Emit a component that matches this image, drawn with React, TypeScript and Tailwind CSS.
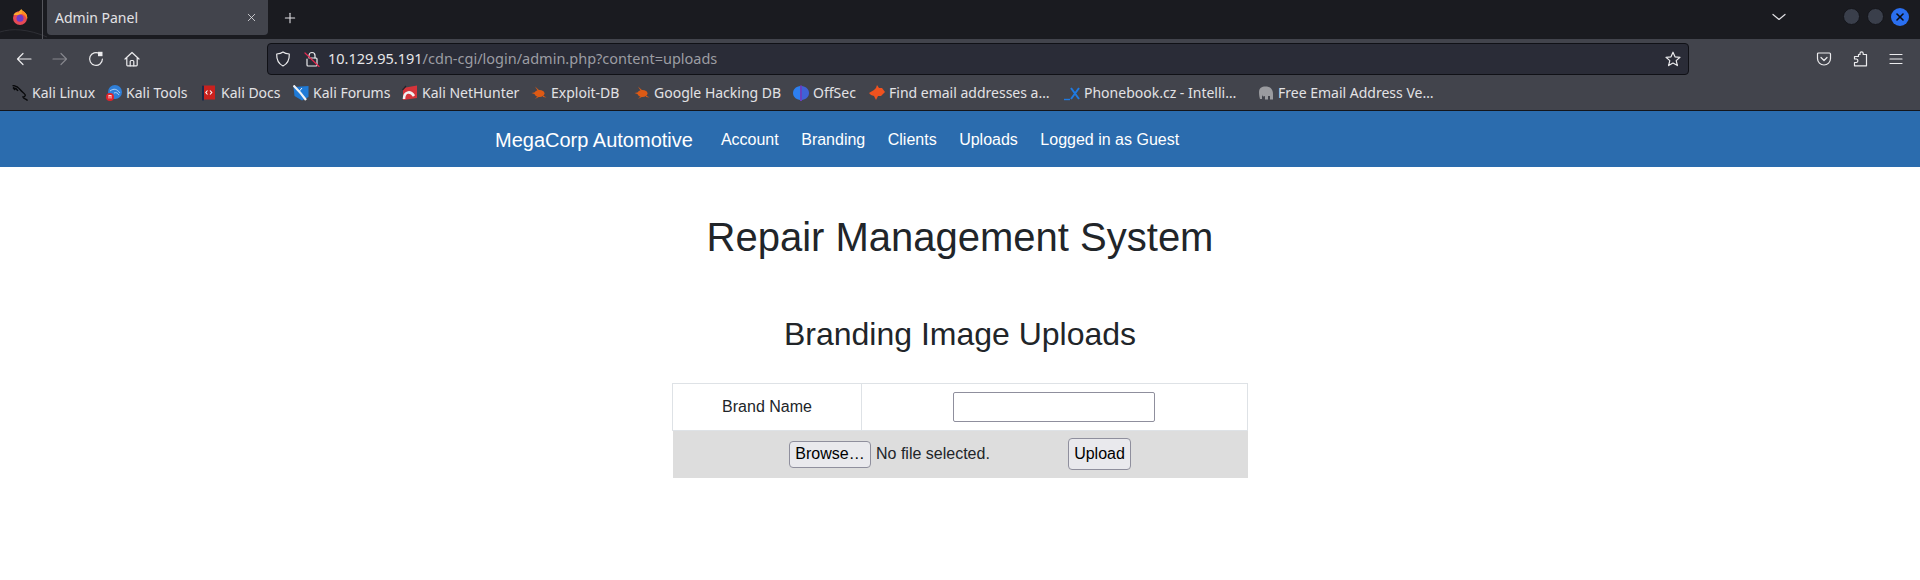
import { Plus, X } from 'lucide-react';
import type { ReactNode } from 'react';

function Glyph({ children, className }: { children: ReactNode; className?: string }) {
  return (
    <svg
      width="16"
      height="16"
      viewBox="0 0 16 16"
      fill="none"
      stroke="currentColor"
      strokeWidth="1.2"
      strokeLinecap="round"
      strokeLinejoin="round"
      className={`shrink-0 ${className ?? ''}`}
    >
      {children}
    </svg>
  );
}

function FirefoxLogo() {
  return (
    <svg width="16" height="16" viewBox="0 0 16 16">
      <circle cx="8" cy="9" r="7" fill="#e64a55" />
      <path d="M1.5 6 C3 3 5 3 6.5 3.5 C7 2 8.5 1 9.5 0 C9.5 2 15.5 3 15.3 9.5 C14 5.5 10 3.8 6 6 Z" fill="#fba92e" />
      <path d="M10 1.5 C14 3.5 16 6.5 15 11 C14.5 7.5 12 5.5 9.5 4.5 Z" fill="#ff8a1f" />
      <circle cx="8" cy="9.3" r="3.5" fill="#6d3bc7" />
    </svg>
  );
}

function KaliIcon() {
  return (
    <svg width="16" height="16" viewBox="0 0 16 16" fill="none" stroke="#08090b" strokeWidth="1.3">
      <path d="M0.5 0.5 C4 0.5 6 2 8 4.5 C10 7 12 8 13 9.5 C14 11 12 12 11 12 C11.5 14 14 13.5 15.5 15.5" />
      <path d="M1 3 C3 3 5 4 6 6 M1 2.5 L3 5" />
    </svg>
  );
}

function KaliToolsIcon() {
  return (
    <svg width="16" height="16" viewBox="0 0 16 16">
      <circle cx="9" cy="7" r="7" fill="#2f7fd8" />
      <path d="M4 6 C8 3 11 4 14 8 M8 8 C10 7 12 8 13 10" stroke="#cfe3f7" strokeWidth="0.8" fill="none" />
      <circle cx="4" cy="12" r="4" fill="#e0242b" />
      <path d="M2.5 10.5 H5.5 M3 10.5 V13.5 M5 10.5 V13.5" stroke="#fff" strokeWidth="0.8" />
    </svg>
  );
}

function KaliDocsIcon() {
  return (
    <svg width="16" height="16" viewBox="0 0 16 16">
      <rect x="1" y="0.5" width="13" height="14" fill="#c9211e" />
      <rect x="1" y="0.5" width="2" height="15" fill="#1c2a4a" />
      <path d="M6.5 5.5 L4.8 7.5 L6.5 9.5 M9 5.5 L10.8 7.5 L9 9.5" stroke="#fff" strokeWidth="1.1" fill="none" />
    </svg>
  );
}

function KaliForumsIcon() {
  return (
    <svg width="16" height="16" viewBox="0 0 16 16">
      <path d="M0.5 2 L15.5 1 V12 L9 15.5 L1.5 11 Z" fill="#1f7ad6" />
      <path d="M0.5 0.5 C4 4 8 8 13 15" stroke="#f0f3f6" strokeWidth="2.2" fill="none" />
      <path d="M9 3 L6 6.5" stroke="#f0f3f6" strokeWidth="1" />
    </svg>
  );
}

function NetHunterIcon() {
  return (
    <svg width="16" height="16" viewBox="0 0 16 16">
      <path d="M1 3 L15 0.5 V13 L1 15 Z" fill="#d5343a" />
      <path d="M2 14 C2 7 8 5 12 11" stroke="#f2f2f2" strokeWidth="2.6" fill="none" />
      <path d="M0.5 5 L4 1" stroke="#20242c" strokeWidth="1.2" />
    </svg>
  );
}

function ExploitIcon() {
  return (
    <svg width="16" height="16" viewBox="0 0 16 16" fill="#dd5a14">
      <ellipse cx="8.5" cy="8.5" rx="5" ry="3.4" />
      <path d="M0.5 8 L6 7 V10 Z M4 1.5 L9 6 L7.5 7 Z M4 14 L8 10 L9.5 11 Z M12 12 L15.5 12.5 L12 10.5 Z" />
    </svg>
  );
}

function OffSecIcon() {
  return (
    <svg width="16" height="16" viewBox="0 0 16 16">
      <path d="M7 1 C2 2 0 5 0 8 C0 11 2 14 7 15 Z" fill="#2d7ff0" />
      <path d="M9 1 C14 2 16 5 16 8 C16 11 14 14 9 15 Z" fill="#3f62d6" />
      <rect x="7.3" y="0.5" width="1.4" height="15.5" fill="#7a3ff0" />
    </svg>
  );
}

function FoxIcon() {
  return (
    <svg width="16" height="16" viewBox="0 0 16 16">
      <path d="M0 8 L5 5 L7 3 L8 0 L10 3 L13 3 L16 7 L12 11 L9 11 L7 15 L5 11 L2 10 Z" fill="#f0521f" />
    </svg>
  );
}

function PhonebookIcon() {
  return (
    <svg width="16" height="16" viewBox="0 0 16 16">
      <path d="M0 14.5 H6" stroke="#1f7ae0" strokeWidth="1.4" />
      <path d="M7 3 L15 14 M15 3 L7 14" stroke="#1f7ae0" strokeWidth="2" />
    </svg>
  );
}

function ElephantIcon() {
  return (
    <svg width="16" height="16" viewBox="0 0 16 16" fill="#9a9b9f">
      <path d="M1 7 C1 2 5 1 9 1.5 C13 2 15 5 15 9 V14.5 H12 V11 H10 V14.5 H7 V11 C5 12 4 11 4 9 V14 H2 C1.5 12 1 10 1 7 Z" />
    </svg>
  );
}

function Bookmark({ icon, label, className }: { icon: ReactNode; label: string; className: string }) {
  return (
    <div className="flex shrink-0 items-center gap-[4px]">
      <span className="flex h-4 w-4 shrink-0 items-center justify-center">{icon}</span>
      <span className={`whitespace-nowrap text-[14px] leading-[20px] text-[#e2e2e5] ${className}`}>{label}</span>
    </div>
  );
}

function BrowserChrome() {
  return (
    <div className="font-['Noto_Sans',sans-serif]">
      {/* Tab strip */}
      <div className="relative flex h-[39px] items-start overflow-hidden bg-[#1a1b20] text-[#e2e2e5]">
        <svg className="absolute bottom-0 left-0" width="47" height="20" viewBox="0 0 47 20" fill="none" stroke="#2e2f35" strokeWidth="1">
          <path d="M0 13 C12 9 28 10 47 18" />
        </svg>
        <div className="relative flex h-[34px] w-[42px] shrink-0 items-center justify-center pr-[2px]">
          <FirefoxLogo />
        </div>
        <div className="relative h-[39px] w-px shrink-0 bg-[#55565c]" />
        <div className="relative ml-[4px] flex h-[35px] w-[221px] shrink-0 items-center justify-between rounded-b-[4px] bg-[#42444c] pl-[8px] pr-[10px]">
          <span className="text-[14px]">Admin Panel</span>
          <X size={13} strokeWidth={1.5} />
        </div>
        <div className="relative ml-[14px] flex h-[36px] w-4 items-center justify-center">
          <Plus size={16} strokeWidth={1.6} />
        </div>
        <div className="relative ml-auto flex h-[33px] items-center pr-[11px]">
          <Glyph className="mr-[56px]">
            <path d="M2 5.5 L8 10.5 L14 5.5" />
          </Glyph>
          <div className="flex items-center gap-[7px]">
            <span className="h-[17px] w-[17px] rounded-full border border-[#14151a] bg-[#3a3f4b]" />
            <span className="h-[17px] w-[17px] rounded-full border border-[#14151a] bg-[#3a3f4b]" />
            <span className="flex h-[18px] w-[18px] items-center justify-center rounded-full bg-[#2a6ff0]">
              <X size={12} strokeWidth={3.2} className="text-[#0b0c10]" />
            </span>
          </div>
        </div>
      </div>
      {/* Toolbar */}
      <div className="flex h-[36px] items-center bg-[#42444c] pt-[4px] text-[#ebebed]">
        <div className="flex w-[267px] shrink-0 items-center gap-[20px] pl-[16px]">
          <Glyph>
            <path d="M1.5 8 H15 M7 2.5 L1.5 8 L7 13.5" />
          </Glyph>
          <Glyph className="text-[#85868c]">
            <path d="M14.5 8 H1 M9 2.5 L14.5 8 L9 13.5" />
          </Glyph>
          <Glyph>
            <path d="M11.5 2.6 A6.4 6.4 0 1 0 14.4 8" />
            <path d="M10 0.8 L14.5 0.8 L14.5 5.2 L10 5.2 Z" fill="currentColor" stroke="none" />
          </Glyph>
          <Glyph>
            <path d="M1 8 L8 1.5 L15 8 M2.8 6.5 V14 A0.8 0.8 0 0 0 3.6 14.8 H12.4 A0.8 0.8 0 0 0 13.2 14 V6.5" />
            <path d="M6.2 14.8 V10.5 A1 1 0 0 1 7.2 9.5 H8.8 A1 1 0 0 1 9.8 10.5 V14.8" />
          </Glyph>
        </div>
        <div className="flex h-[32px] w-[1422px] shrink-0 items-center rounded-[4px] border border-[#101116] bg-[#2a2c37] pl-[7px] pr-[7px] text-[14.5px]">
          <Glyph>
            <path d="M8 1 C10 2.5 12 2.8 14.3 3 C14.5 8.5 12.5 12.8 8 15 C3.5 12.8 1.5 8.5 1.7 3 C4 2.8 6 2.5 8 1 Z" />
          </Glyph>
          <Glyph className="ml-[13px]">
            <path d="M5 7 V4.5 A3 3 0 0 1 11 4.5 V7" />
            <path d="M3 8 V14 A1 1 0 0 0 4 15 H12 A1 1 0 0 0 13 14 V8 A1 1 0 0 0 12 7 H6" />
            <path d="M1 2 L15 15.5" stroke="#e3294f" />
          </Glyph>
          <span className="ml-[8px] text-[#e6e6e8]">10.129.95.191</span>
          <span className="text-[#9c9da3]">/cdn-cgi/login/admin.php?content=uploads</span>
          <Glyph className="ml-auto">
            <path d="M8 1.2 L10 5.8 L15 6.3 L11.2 9.6 L12.4 14.6 L8 12 L3.6 14.6 L4.8 9.6 L1 6.3 L6 5.8 Z" />
          </Glyph>
        </div>
        <div className="flex flex-1 items-center justify-end gap-[20px] pr-[16px]">
          <Glyph>
            <path d="M2.5 2 H13.5 A1 1 0 0 1 14.5 3 V7.5 A6.5 6.5 0 0 1 1.5 7.5 V3 A1 1 0 0 1 2.5 2 Z" />
            <path d="M5 6.5 L8 9.5 L11 6.5" />
          </Glyph>
          <Glyph>
            <path d="M6.5 3.5 H8 V2.5 A1.6 1.6 0 0 1 11.2 2.5 V3.5 H14.5 V14.8 H2.5 V11.5 H4.5 A1.8 1.8 0 0 0 4.5 8 H2.5 V5.5 H6.5 Z" />
          </Glyph>
          <Glyph>
            <path d="M2 3.5 H14 M2 8 H14 M2 12.5 H14" />
          </Glyph>
        </div>
      </div>
      {/* Bookmarks */}
      <div className="flex h-[36px] items-center gap-[13px] border-b border-[#14151a] bg-[#42444c] pt-[1px] pl-[12px]">
        <Bookmark icon={<KaliIcon />} label="Kali Linux" className="w-[61px]" />
        <Bookmark icon={<KaliToolsIcon />} label="Kali Tools" className="w-[62px]" />
        <Bookmark icon={<KaliDocsIcon />} label="Kali Docs" className="w-[59px]" />
        <Bookmark icon={<KaliForumsIcon />} label="Kali Forums" className="w-[76px]" />
        <Bookmark icon={<NetHunterIcon />} label="Kali NetHunter" className="w-[96px]" />
        <Bookmark icon={<ExploitIcon />} label="Exploit-DB" className="w-[70px]" />
        <Bookmark icon={<ExploitIcon />} label="Google Hacking DB" className="w-[126px]" />
        <Bookmark icon={<OffSecIcon />} label="OffSec" className="w-[43px]" />
        <Bookmark icon={<FoxIcon />} label="Find email addresses a…" className="w-[162px]" />
        <Bookmark icon={<PhonebookIcon />} label="Phonebook.cz - Intelli…" className="w-[161px]" />
        <Bookmark icon={<ElephantIcon />} label="Free Email Address Ve…" className="w-[160px]" />
      </div>
    </div>
  );
}

export default function App() {
  return (
    <div className="h-[580px] overflow-hidden bg-white font-['Liberation_Sans',Arial,sans-serif] text-[#212529]">
      <BrowserChrome />
      {/* Site nav */}
      <nav className="flex h-[56px] items-center bg-[#2b6cae] pl-[495px] pt-[1px] text-white">
        <a className="mr-[28px] text-[20px]">MegaCorp Automotive</a>
        <div className="flex items-center gap-[22.5px] text-[16px]">
          <a>Account</a>
          <a>Branding</a>
          <a>Clients</a>
          <a>Uploads</a>
          <a>Logged in as Guest</a>
        </div>
      </nav>
      <main className="flex flex-col items-center">
        <h1 className="mt-[46px] text-[40px] leading-[48px]">Repair Management System</h1>
        <h2 className="mt-[54px] text-[32px] leading-[38px]">Branding Image Uploads</h2>
        <table className="mt-[30px] w-[576px] border-collapse text-[16px]">
          <tbody>
            <tr className="h-[47px]">
              <td className="w-[189px] border border-[#dee2e6] text-center">Brand Name</td>
              <td className="border border-[#dee2e6] text-center">
                <div className="mr-[2px] flex justify-center">
                  <input className="h-[30px] w-[202px] rounded-[2px] border border-[#8f8f9d] bg-white" />
                </div>
              </td>
            </tr>
            <tr className="h-[47px] bg-[#dddddd]">
              <td colSpan={2}>
                <div className="flex items-center justify-center">
                  <div className="flex w-[279px] items-center">
                    <button className="h-[27px] w-[82px] rounded-[4px] border border-[#8f8f9d] bg-[#e9e9ed] text-[16px] text-black">Browse…</button>
                    <span className="ml-[5px]">No file selected.</span>
                  </div>
                  <button className="h-[32px] w-[63px] rounded-[4px] border border-[#8f8f9d] bg-[#e9e9ed] text-[16px] text-black">Upload</button>
                </div>
              </td>
            </tr>
          </tbody>
        </table>
      </main>
    </div>
  );
}
